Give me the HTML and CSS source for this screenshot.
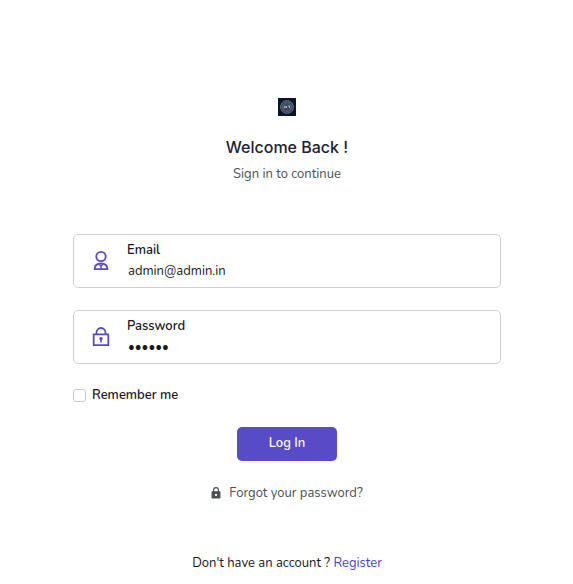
FILE: index.html
```html
<!DOCTYPE html>
<html lang="en">
<head>
<meta charset="utf-8">
<meta name="viewport" content="width=device-width, initial-scale=1">
<title>Log In</title>
<link rel="stylesheet" href="styles.css">
</head>
<body>
<main class="login">
  <header class="intro">
    <svg class="logo" viewBox="0 0 18 18" aria-hidden="true">
      <rect width="18" height="18" fill="#08162b"/>
      <circle cx="9" cy="9" r="6.8" fill="#3d4a5c"/>
      <circle cx="9" cy="9" r="6.4" fill="none" stroke="#75808e" stroke-width="1" stroke-dasharray="1.5 1"/>
      <circle cx="9" cy="9" r="4.4" fill="none" stroke="#667282" stroke-width="1" stroke-dasharray="2 1"/>
      <path d="M6 10l1-2v2M8.500 8v2M10 8h1.500v2" fill="none" stroke="#aab1ba" stroke-width="1"/>
    </svg>
    <h1 class="title">Welcome Back !</h1>
    <p class="subtitle">Sign in to continue</p>
  </header>
  <form class="form">
    <div class="field">
      <svg class="field-icon" viewBox="0 0 20 22" aria-hidden="true">
        <circle cx="10" cy="6.500" r="4.700"/>
        <path d="M3.600 19.200c0-4 2.800-5.700 6.400-5.700s6.400 1.700 6.400 5.700z"/>
        <path class="thin" d="M7.500 14l2.500 2 2.500-2M10 16v3"/>
      </svg>
      <div class="field-body">
        <label class="label" for="email">Email</label>
        <input class="input" id="email" type="email" value="admin@admin.in">
      </div>
    </div>
    <div class="field">
      <svg class="field-icon" viewBox="0 0 20 22" aria-hidden="true">
        <path d="M2.700 8.300h14.600v10.900H2.700zM5.500 8V6.500a4.500 4.500 0 0 1 9 0V8"/>
        <path class="keyhole" d="M10 11a1.700 1.700 0 0 1 .8 3.200V16.500H9.200v-2.300A1.700 1.700 0 0 1 10 11z"/>
      </svg>
      <div class="field-body">
        <label class="label" for="password">Password</label>
        <input class="input" id="password" type="password" value="secret">
      </div>
    </div>
    <div class="remember">
      <input class="checkbox" id="remember" type="checkbox">
      <label class="label" for="remember">Remember me</label>
    </div>
    <button class="submit" type="submit">Log In</button>
    <a class="forgot" href="#forgot">
      <svg class="lock" viewBox="0 0 10 12" aria-hidden="true">
        <path fill-rule="evenodd" d="M1.500 4.200H2V3a3 3 0 0 1 6 0v1.200h.5a1 1 0 0 1 1 1v5.300a1 1 0 0 1-1 1h-7a1 1 0 0 1-1-1V5.200a1 1 0 0 1 1-1zM3.200 4.200h3.600V3a1.800 1.800 0 0 0-3.600 0zM5 6.800a1.100 1.100 0 1 0 0 2.200 1.100 1.100 0 0 0 0-2.200z"/>
      </svg>
      Forgot your password?
    </a>
  </form>
  <p class="signup">Don't have an account ? <a class="register" href="#register">Register</a></p>
</main>
</body>
</html>
```
FILE: styles.css
```css
* {
  box-sizing: border-box;
}

body {
  margin: 0;
  background: #fff;
  color: #17191c;
  font: 13px/20px Nunito, "Noto Sans", sans-serif;
}

.login {
  max-width: 574px;
  margin: 0 auto;
  padding: 98px 72px 0 73px;
}

.intro {
  display: flex;
  flex-direction: column;
  align-items: center;
  margin-bottom: 50px;
}

.logo {
  width: 18px;
  height: 18px;
}

.title {
  margin: 21px 0 7px;
  color: #1e2033;
  font: 500 16px/20px Inter, sans-serif;
}

.subtitle {
  margin: 0;
  color: #4c5156;
}

.form {
  display: flex;
  flex-direction: column;
}

.field {
  display: flex;
  align-items: center;
  height: 54px;
  margin-bottom: 22px;
  padding: 0 17px;
  border: 1px solid #ced0d2;
  border-radius: 5px;
}

.field-icon {
  flex: none;
  width: 20px;
  height: 22px;
  margin-right: 16px;
  fill: none;
  stroke: #564ccb;
  stroke-width: 1.800;
}

.field-icon .thin {
  stroke-width: 1.400;
}

.field-icon .keyhole {
  fill: #564ccb;
  stroke: none;
}

.field-body {
  display: flex;
  flex: 1;
  flex-direction: column;
}

.label {
  font-weight: 600;
}

.input {
  width: 100%;
  height: 22px;
  padding: 0 1px;
  border: 0;
  outline: 0;
  background: none;
  color: #17191c;
  font: inherit;
}

.remember {
  display: flex;
  align-items: center;
  gap: 6px;
  margin: -1px 0 22px;
}

.checkbox {
  width: 13px;
  height: 13px;
  margin: 0;
  appearance: none;
  border: 1px solid #c8cacc;
  border-radius: 3px;
  background: #fff;
}

.submit {
  align-self: center;
  height: 34px;
  margin-bottom: 22px;
  padding: 0 32px 2px;
  border: 0;
  border-radius: 5px;
  background: #574bc8;
  color: #fff;
  font: inherit;
  font-weight: 600;
}

.forgot {
  display: flex;
  align-items: center;
  align-self: center;
  gap: 8px;
  color: #4c5156;
  text-decoration: none;
}

.lock {
  width: 10px;
  height: 12px;
  fill: #4c5156;
}

.signup {
  margin: 50px 0 0;
  text-align: center;
}

.register {
  color: #4b3fd0;
  text-decoration: none;
}
```
